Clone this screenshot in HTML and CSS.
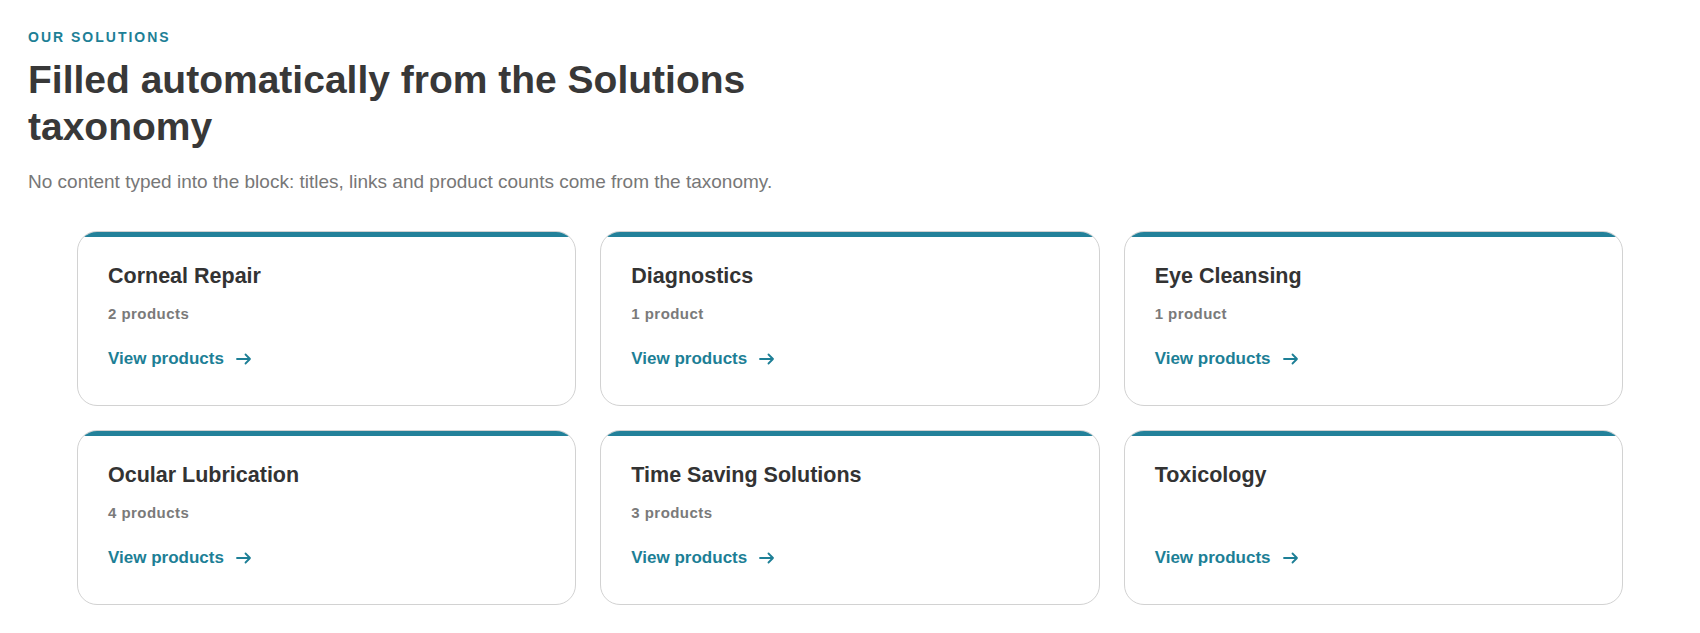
FILE: index.html
```html
<!DOCTYPE html>
<html lang="en">
  <head>
    <meta charset="UTF-8" />
    <meta name="viewport" content="width=device-width, initial-scale=1" />
    <title>Our Solutions</title>
    <link rel="stylesheet" href="styles.css">
  </head>
  <body>
    <section class="solutions">
      <div class="solutions-head">
        <div class="eyebrow">Our Solutions</div>
        <h1>Filled automatically from the Solutions taxonomy</h1>
        <p class="lead">
          No content typed into the block: titles, links and product counts come from the taxonomy.
        </p>
      </div>

      <div class="solution-grid">
        <div class="solution-card">
          <h2>Corneal Repair</h2>
          <div class="count">2 products</div>
          <a class="card-link" href="#">View products
            <svg width="18" height="16" viewBox="0 0 18 16"><path d="M2 8h13M10.5 3.5L15 8l-4.5 4.5" /></svg>
          </a>
        </div>
        <div class="solution-card">
          <h2>Diagnostics</h2>
          <div class="count">1 product</div>
          <a class="card-link" href="#">View products
            <svg width="18" height="16" viewBox="0 0 18 16"><path d="M2 8h13M10.5 3.5L15 8l-4.5 4.5" /></svg>
          </a>
        </div>
        <div class="solution-card">
          <h2>Eye Cleansing</h2>
          <div class="count">1 product</div>
          <a class="card-link" href="#">View products
            <svg width="18" height="16" viewBox="0 0 18 16"><path d="M2 8h13M10.5 3.5L15 8l-4.5 4.5" /></svg>
          </a>
        </div>
        <div class="solution-card">
          <h2>Ocular Lubrication</h2>
          <div class="count">4 products</div>
          <a class="card-link" href="#">View products
            <svg width="18" height="16" viewBox="0 0 18 16"><path d="M2 8h13M10.5 3.5L15 8l-4.5 4.5" /></svg>
          </a>
        </div>
        <div class="solution-card">
          <h2>Time Saving Solutions</h2>
          <div class="count">3 products</div>
          <a class="card-link" href="#">View products
            <svg width="18" height="16" viewBox="0 0 18 16"><path d="M2 8h13M10.5 3.5L15 8l-4.5 4.5" /></svg>
          </a>
        </div>
        <!-- no products counted for this one -->
        <div class="solution-card">
          <h2>Toxicology</h2>
          <a class="card-link" href="#">View products
            <svg width="18" height="16" viewBox="0 0 18 16"><path d="M2 8h13M10.5 3.5L15 8l-4.5 4.5" /></svg>
          </a>
        </div>
      </div>
    </section>
  </body>
</html>
```

FILE: styles.css
```css
body {
  margin: 0;
  padding: 0;
  font-family: "Liberation Sans", Arial, sans-serif;
  background-color: #ffffff;
  color: #333;
}

.solutions {
  padding: 28px 28px;
}

.eyebrow {
  font-size: 14px;
  line-height: 1.4;
  font-weight: bold;
  text-transform: uppercase;
  letter-spacing: 2px;
  color: #1d7f96;
}

h1 {
  margin: 8px 0 0;
  max-width: 800px;
  font-size: 39px;
  line-height: 47px;
  font-weight: bold;
  color: #383838;
}

.lead {
  margin: 18px 0 0;
  font-size: 19px;
  line-height: 1.5;
  color: #777;
}

.solution-grid {
  display: grid;
  grid-template-columns: repeat(3, 1fr);
  gap: 24px 24px;
  margin: 35px 49px 0;
}

.solution-card {
  position: relative;
  overflow: hidden;
  display: flex;
  flex-direction: column;
  align-items: flex-start;
  padding: 31px 30px 34px;
  border: 1px solid #d2d2d2;
  border-radius: 20px;
  background-color: white;
}

.solution-card::before {
  content: "";
  position: absolute;
  top: 0;
  left: 0;
  right: 0;
  height: 5px;
  background-color: #23819a;
}

.solution-card h2 {
  margin: 0;
  font-size: 21.5px;
  line-height: 1.3;
  font-weight: bold;
  color: #333;
}

.count {
  margin-top: 12px;
  font-size: 15px;
  line-height: 1.4;
  font-weight: bold;
  letter-spacing: 0.45px;
  color: #7a7a7a;
}

.card-link {
  display: inline-flex;
  align-items: center;
  gap: 11px;
  margin-top: auto;
  padding-top: 23px;
  font-size: 17px;
  line-height: 1.4;
  font-weight: bold;
  color: #1d7f96;
  text-decoration: none;
}

.card-link svg {
  fill: none;
  stroke: #1d7f96;
  stroke-width: 1.8;
  stroke-linecap: round;
  stroke-linejoin: round;
}
```
